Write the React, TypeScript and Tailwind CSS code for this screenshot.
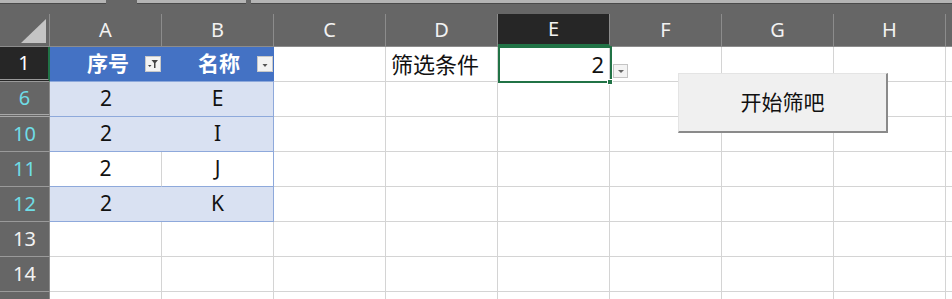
import React from 'react';

const COLS = ['A', 'B', 'C', 'D', 'E', 'F', 'G', 'H', ''];

type Row = {
  n: string;
  a?: string;
  b?: string;
  band?: boolean;
  table?: boolean;
  filtered?: boolean;
  hiddenAfter?: boolean;
};

const ROWS: Row[] = [
  { n: '6', a: '2', b: 'E', band: true, table: true, filtered: true, hiddenAfter: true },
  { n: '10', a: '2', b: 'I', band: true, table: true, filtered: true },
  { n: '11', a: '2', b: 'J', table: true, filtered: true },
  { n: '12', a: '2', b: 'K', band: true, table: true, filtered: true },
  { n: '13' },
  { n: '14' },
  { n: '' },
];

const font = { fontFamily: '"Noto Sans", "Noto Sans CJK SC", sans-serif' };

function FilterButton({ active }: { active?: boolean }) {
  return (
    <div className="w-[16px] h-[16px] bg-[#f3f3f3] border border-[#c8c8c8] flex items-end justify-center pb-[2px]">
      <svg width="12" height="10" viewBox="0 0 12 10">
        {active ? (
          <>
            <path d="M4.5 1 H11 L8.5 4 V9 H7 V4 Z" fill="#444" />
            <path d="M1 6 H4.5 L2.75 8 Z" fill="#444" />
          </>
        ) : (
          <path d="M3.5 5 H8.5 L6 8 Z" fill="#555" />
        )}
      </svg>
    </div>
  );
}

export default function App() {
  return (
    <div className="relative w-[952px] h-[299px] overflow-hidden bg-white select-none" style={font}>
      {/* sheet tabs strip */}
      <div className="h-[14px] bg-[#666666] flex items-start">
        <div className="h-[4px] w-[106px] bg-[#b4b4b4] border-b border-[#4a4a4a]" />
        <div className="h-[4px] w-[109px] ml-[31px] bg-[#b4b4b4] border-b border-[#4a4a4a]" />
        <div className="h-[4px] flex-1 ml-[5px] bg-[#b4b4b4] border-b border-[#4a4a4a]" />
      </div>

      {/* column header */}
      <div className="flex h-[33px] bg-[#666666] border-b border-[#8c8c8c]">
        <div className="relative w-[50px] shrink-0 border-r border-[#8c8c8c]">
          <div className="absolute right-[3px] bottom-[3px] w-0 h-0 border-l-[25px] border-l-transparent border-b-[24px] border-b-[#c4c4c4]" />
        </div>
        {COLS.map((c, i) => (
          <div
            key={i}
            className={`w-[112px] shrink-0 flex items-center justify-center text-[20px] text-[#f2f2f2] border-r border-[#8c8c8c] ${
              c === 'E' ? 'bg-[#262626] border-b-2 border-b-[#217346]' : ''
            }`}
          >
            {c}
          </div>
        ))}
      </div>

      {/* row 1 */}
      <div className="flex h-[35px]">
        <div className="w-[50px] shrink-0 bg-[#262626] border-r-2 border-[#217346] border-b-[3px] border-b-[#9a9a9a] border-double flex items-center justify-center text-[20px] text-white">
          1
        </div>
        <div className="w-[112px] shrink-0 bg-[#4472c4] border-b border-[#8ea9db] flex items-center justify-end gap-[16px] pr-[1px] text-[21px] font-bold text-white">
          <span>序号</span>
          <FilterButton active />
        </div>
        <div className="w-[112px] shrink-0 bg-[#4472c4] border-b border-[#8ea9db] flex items-center justify-end gap-[17px] pr-[1px] text-[21px] font-bold text-white">
          <span>名称</span>
          <FilterButton />
        </div>
        <div className="w-[112px] shrink-0 border-r border-b border-[#d4d4d4]" />
        <div className="w-[112px] shrink-0 border-r border-b border-[#d4d4d4] flex items-center pl-[5px] text-[22px] text-[#111]">
          筛选条件
        </div>
        <div className="w-[112px] shrink-0 border-r border-b border-[#d4d4d4] flex items-center justify-end pr-[5px] text-[22px] text-[#111]">
          2
        </div>
        {['F', 'G', 'H', 'I'].map((c) => (
          <div key={c} className="w-[112px] shrink-0 border-r border-b border-[#d4d4d4]" />
        ))}
      </div>

      {ROWS.map((r, i) => (
        <div key={i} className="flex h-[35px]">
          <div
            className={`w-[50px] shrink-0 bg-[#666666] border-r border-[#8c8c8c] flex items-center justify-center text-[20px] ${
              r.filtered ? 'text-[#6fdde6]' : 'text-[#f2f2f2]'
            } ${r.hiddenAfter ? 'border-b-[3px] border-double border-b-[#a8a8a8]' : 'border-b border-b-[#9a9a9a]'}`}
          >
            {r.n}
          </div>
          {r.table ? (
            <>
              <div
                className={`w-[112px] shrink-0 flex items-center justify-center text-[21px] text-[#111] border-b border-[#8ea9db] ${
                  r.band ? 'bg-[#d9e1f2]' : 'bg-white border-r border-r-[#d4d4d4]'
                }`}
              >
                {r.a}
              </div>
              <div
                className={`w-[112px] shrink-0 flex items-center justify-center text-[21px] text-[#111] border-b border-r border-[#8ea9db] ${
                  r.band ? 'bg-[#d9e1f2]' : 'bg-white'
                }`}
              >
                {r.b}
              </div>
            </>
          ) : (
            <>
              <div className="w-[112px] shrink-0 border-r border-b border-[#d4d4d4]" />
              <div className="w-[112px] shrink-0 border-r border-b border-[#d4d4d4]" />
            </>
          )}
          {['C', 'D', 'E', 'F', 'G', 'H', 'I'].map((c) => (
            <div key={c} className="w-[112px] shrink-0 border-r border-b border-[#d4d4d4]" />
          ))}
        </div>
      ))}

      {/* active cell E1 */}
      <div className="absolute left-[498px] top-[46px] w-[114px] h-[37px] border-2 border-[#217346] pointer-events-none" />
      <div className="absolute left-[607px] top-[79px] w-[6px] h-[6px] bg-[#217346] border border-white" />

      {/* data validation dropdown */}
      <div className="absolute left-[613px] top-[64px] w-[15px] h-[14px] bg-[#f3f3f3] border border-[#c4c4c4] flex items-center justify-center">
        <svg width="8" height="5" viewBox="0 0 8 5">
          <path d="M1 1 H7 L4 4 Z" fill="#666" />
        </svg>
      </div>

      {/* form button */}
      <button className="absolute left-[678px] top-[73px] w-[210px] h-[60px] bg-[#f0f0f0] border-t border-l border-[#e4e4e4] border-r-2 border-b-2 border-r-[#8a8a8a] border-b-[#8a8a8a] flex items-center justify-center text-[21px] text-[#111]">
        开始筛吧
      </button>
    </div>
  );
}
